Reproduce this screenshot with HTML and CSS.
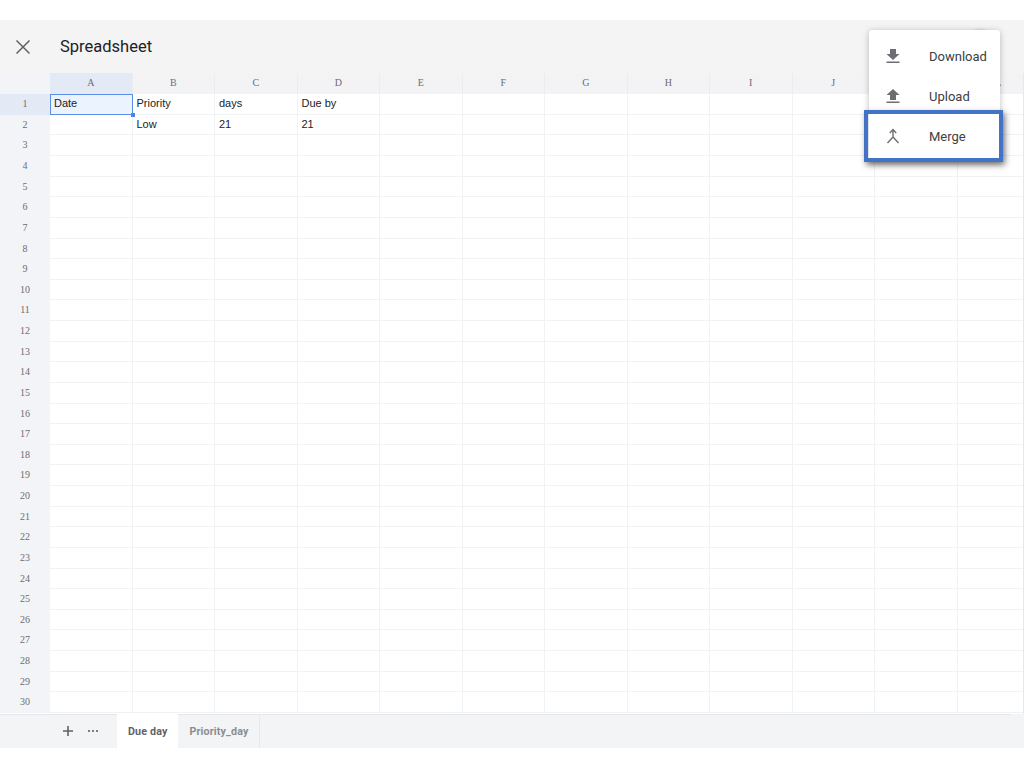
FILE: index.html
```html
<!DOCTYPE html>
<html lang="en">
<head>
<meta charset="utf-8">
<title>Spreadsheet</title>
<link rel="stylesheet" href="styles.css">
</head>
<body>
<div class="app">
  <header class="topbar">
    <svg class="close" viewBox="0 0 14 14" width="14" height="14"><path d="M1 1l12 12M13 1L1 13"/></svg>
    <h1 class="title">Spreadsheet</h1>
    <span class="avatar"></span>
  </header>
  <div class="sheet">
    <div class="row colheads">
      <div class="rh"></div>
      <div class="ch active">A</div><div class="ch">B</div><div class="ch">C</div><div class="ch">D</div><div class="ch">E</div><div class="ch">F</div><div class="ch">G</div><div class="ch">H</div><div class="ch">I</div><div class="ch">J</div><div class="ch">K</div><div class="ch">L</div>
    </div>
    <div class="row"><div class="rh active">1</div><div class="cell selected">Date<i class="handle"></i></div><div class="cell">Priority</div><div class="cell">days</div><div class="cell">Due by</div></div>
    <div class="row"><div class="rh">2</div><div class="cell"></div><div class="cell">Low</div><div class="cell">21</div><div class="cell">21</div></div>
    <div class="row"><div class="rh">3</div></div>
    <div class="row"><div class="rh">4</div></div>
    <div class="row"><div class="rh">5</div></div>
    <div class="row"><div class="rh">6</div></div>
    <div class="row"><div class="rh">7</div></div>
    <div class="row"><div class="rh">8</div></div>
    <div class="row"><div class="rh">9</div></div>
    <div class="row"><div class="rh">10</div></div>
    <div class="row"><div class="rh">11</div></div>
    <div class="row"><div class="rh">12</div></div>
    <div class="row"><div class="rh">13</div></div>
    <div class="row"><div class="rh">14</div></div>
    <div class="row"><div class="rh">15</div></div>
    <div class="row"><div class="rh">16</div></div>
    <div class="row"><div class="rh">17</div></div>
    <div class="row"><div class="rh">18</div></div>
    <div class="row"><div class="rh">19</div></div>
    <div class="row"><div class="rh">20</div></div>
    <div class="row"><div class="rh">21</div></div>
    <div class="row"><div class="rh">22</div></div>
    <div class="row"><div class="rh">23</div></div>
    <div class="row"><div class="rh">24</div></div>
    <div class="row"><div class="rh">25</div></div>
    <div class="row"><div class="rh">26</div></div>
    <div class="row"><div class="rh">27</div></div>
    <div class="row"><div class="rh">28</div></div>
    <div class="row"><div class="rh">29</div></div>
    <div class="row"><div class="rh">30</div></div>
  </div>
  <footer class="tabs">
    <svg class="add" viewBox="0 0 10 10" width="10" height="10"><path d="M5 0v10M0 5h10"/></svg>
    <svg class="more" viewBox="0 0 12 4" width="12" height="4"><circle cx="2" cy="2" r="1.1"/><circle cx="6" cy="2" r="1.1"/><circle cx="10" cy="2" r="1.1"/></svg>
    <div class="tab current">Due day</div>
    <div class="tab">Priority_day</div>
  </footer>
</div>
<div class="menu">
  <div class="item">
    <svg viewBox="0 0 14 16" width="14" height="16"><path class="fill" d="M4 1h6v5h3.5L7 12 .5 6H4z"/><path class="fill" d="M.5 13.5h13V15H.5z"/></svg>
    <span>Download</span>
  </div>
  <div class="item">
    <svg viewBox="0 0 14 16" width="14" height="16"><path class="fill" d="M4 12h6V7h3.5L7 1 .5 7H4z"/><path class="fill" d="M.5 13.5h13V15H.5z"/></svg>
    <span>Upload</span>
  </div>
  <div class="item">
    <svg viewBox="0 0 14 16" width="14" height="16"><path class="line" d="M7 2v7M3.8 5L7 1.6 10.2 5M7 9l-5.5 6M7 9l5.5 6"/></svg>
    <span>Merge</span>
  </div>
</div>
<div class="highlight"></div>
</body>
</html>
```
FILE: styles.css
```css
* { box-sizing: border-box; }
html, body { margin: 0; height: 100%; background: #fff; overflow: hidden; }
body { font-family: "Liberation Sans", Arial, sans-serif; color: #222; }
.app { padding-top: 20px; display: flex; flex-direction: column; height: 748px; }
.topbar { height: 53px; background: #f4f4f5; display: flex; align-items: center; padding: 0 0 0 16px; flex: none; position: relative; }
.close { fill: none; stroke: #5f6368; stroke-width: 1.5; }
.close path { stroke-linecap: square; }
.title { font-family: Roboto, "Liberation Sans", sans-serif; font-weight: 400; font-size: 16.5px; margin: 0 0 0 30px; color: #202124; }
.avatar { position: absolute; right: 32px; top: 8px; width: 24px; height: 24px; border-radius: 50%; background: #e6e6e7; }
.sheet { flex: none; height: 640.5px; overflow: hidden; width: 1024px; border-right: 1px solid #e8e8e8; }
.row { display: flex; height: 20.63px;
  background-image: linear-gradient(#f1f2f4, #f1f2f4), repeating-linear-gradient(90deg, transparent 0, transparent 81.5px, #f1f2f4 81.5px, #f1f2f4 82.5px);
  background-size: 100% 1px, 100% 100%;
  background-position: 0 100%, 50px 0;
  background-repeat: no-repeat;
}
.colheads { background: #f3f3f6; height: 21.2px; }
.rh { width: 50px; flex: none; background: #f3f4f7; color: #6b6d70; font-family: "Liberation Serif", serif; font-size: 10px; text-align: center; line-height: 19px; }
.rh.active { background: #e3eaf6; }
.ch { width: 82.5px; flex: none; text-align: center; font-family: "Liberation Serif", serif; font-size: 10px; color: #6b6d70; line-height: 20px; border-right: 1px solid #ebecee; }
.ch.active { background: #e3eaf6; }
.cell { width: 82.5px; flex: none; font-size: 11px; line-height: 19px; padding-left: 4px; color: #222; position: relative; }
.cell.selected { background: #eaf3fe; border: 1.5px solid #5c8de8; padding-left: 3px; line-height: 17px; height: 21px; }
.handle { position: absolute; right: -3px; bottom: -3px; width: 4px; height: 4px; background: #4a85ee; }
.tabs { height: 34.5px; background: linear-gradient(#e6e6e8, #e6e6e8) 0 0 / 1011px 1px no-repeat, #f3f4f6; display: flex; align-items: center; flex: none; padding-left: 63px; }
.add { stroke: #5f6368; stroke-width: 1.6; fill: none; margin-right: 14px; }
.more { fill: #5f6368; margin-right: 18px; }
.tab { height: 100%; padding: 0 11px; font-family: Roboto, "Liberation Sans", sans-serif; font-weight: 700; font-size: 10.7px; letter-spacing: .15px; line-height: 35px; color: #8a8d91; border-right: 1px solid #e8e9eb; }
.tab.current { background: #fff; color: #5f6368; border-right: 0; }
.menu { position: absolute; left: 869px; top: 30px; width: 131px; height: 131px; background: #fff; border-radius: 3px; box-shadow: 0 1px 6px rgba(0,0,0,.25); padding-top: 6px; }
.item { display: flex; align-items: center; height: 40px; padding-left: 17px; font-family: Roboto, "Liberation Sans", sans-serif; font-size: 13px; color: #3c4043; }
.item svg { flex: none; margin-right: 29px; }
.item .fill { fill: #6c6e71; }
.item .line { fill: none; stroke: #6c6e71; stroke-width: 1.4; }
.highlight { position: absolute; left: 864px; top: 110px; width: 139px; height: 52px; border: 4px solid #4472c4; box-shadow: 2px 3px 6px rgba(0,0,0,.5); }
```
